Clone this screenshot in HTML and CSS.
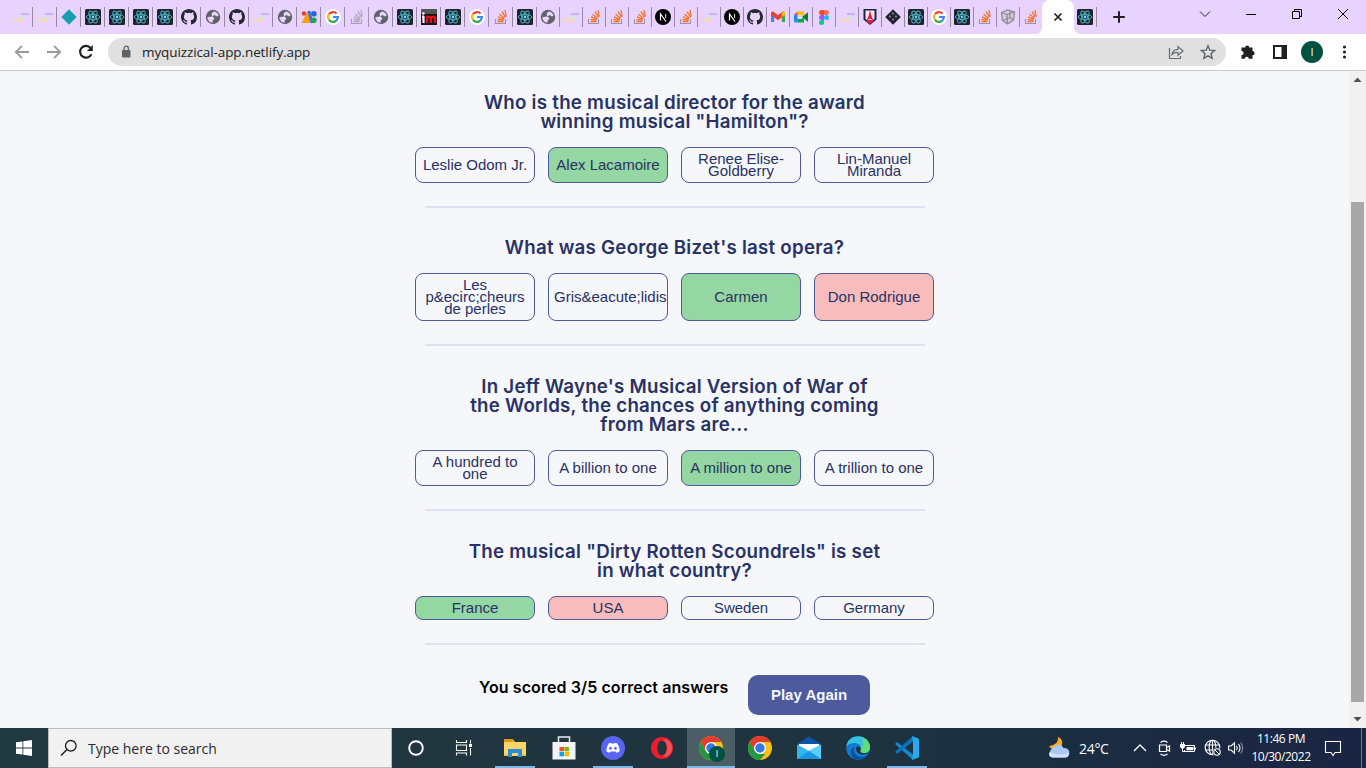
FILE: index.html
```html
<!DOCTYPE html>
<html lang="en">
<head>
<meta charset="utf-8">
<title>Quizzical</title>
<link rel="stylesheet" href="styles.css">
</head>
<body>
<svg class="sprite" aria-hidden="true">
  <symbol id="dash" viewBox="0 0 16 16"><path d="M8 4h8v2H8z" fill="#c0b2fb"/><path d="M6 7h7v3H6z" fill="#dbe0e5"/><path d="M0 10h3v2H0zM4 10h7v2H4z" fill="#fdd9a0"/></symbol>
  <symbol id="gem" viewBox="0 0 16 16"><path d="M8 .3 15.600 8 8 15.700.4 8z" fill="#189eae"/></symbol>
  <symbol id="react" viewBox="0 0 16 16"><rect width="16" height="16" rx="1.500" fill="#20232a"/><g fill="none" stroke="#4fb5cd" stroke-width=".9"><ellipse cx="8" cy="8" rx="6.700" ry="2.600"/><ellipse cx="8" cy="8" rx="6.700" ry="2.600" transform="rotate(60 8 8)"/><ellipse cx="8" cy="8" rx="6.700" ry="2.600" transform="rotate(120 8 8)"/></g><circle cx="8" cy="8" r="1.400" fill="#61dafb"/></symbol>
  <symbol id="github" viewBox="0 0 16 16"><path fill="#24292f" d="M8 0C3.580 0 0 3.580 0 8c0 3.540 2.290 6.530 5.470 7.590.4.07.55-.17.55-.38v-1.490c-2.010.37-2.530-.49-2.690-.94-.09-.23-.48-.94-.82-1.130-.28-.15-.68-.52-.01-.53.63-.01 1.080.58 1.230.82.72 1.210 1.870.87 2.330.66.07-.52.28-.87.51-1.070-1.780-.2-3.640-.89-3.640-3.950 0-.87.31-1.590.82-2.150-.08-.2-.36-1.020.08-2.120 0 0 .67-.21 2.200.82a7.500 7.500 0 0 1 4 0c1.530-1.040 2.200-.82 2.200-.82.44 1.100.16 1.920.08 2.120.51.56.82 1.270.82 2.150 0 3.070-1.870 3.750-3.650 3.950.29.25.54.73.54 1.480v2.200c0 .21.15.46.55.38A8 8 0 0 0 16 8c0-4.420-3.580-8-8-8z"/></symbol>
  <symbol id="globe" viewBox="0 0 16 16"><circle cx="8" cy="8" r="7.200" fill="#5f6368"/><path d="M8.700 2.500c-.4.600-2.300 1-2.300 2.100 0 1 .9 1.300.5 2.300-.3.900-1.900.6-2.900 1.100H2.400c0 3.100 2.200 5.500 5.200 5.700v-2c.5-1.100 1.700-.9 1.700-2.200 0-1.400-1.300-1.300-2.300-1.700 1-.8 1.600-1.800 2.900-1.600 1.200.2 1.200 1.200 2.100 1.200.7 0 1.200-.5 1.600-.8-.5-2.200-2.400-4-4.900-4.100z" fill="#e8d3ff"/><path d="m3.600 4.300 3.100-2 .8 1.300-1.600 2.200-2.600.6z" fill="#5f6368"/></symbol>
  <symbol id="shapes" viewBox="0 0 16 16"><circle cx="3" cy="4.500" r="2.300" fill="#ea4335"/><path d="M.5 14 6.500 2.500H9V14z" fill="#fb9d05"/><path d="M6.500 2h3l3 12h-3z" fill="#3971e8"/><circle cx="12.900" cy="4.800" r="2.800" fill="#2464dc"/><circle cx="12.900" cy="11.300" r="2.800" fill="#25a451"/></symbol>
  <symbol id="google" viewBox="0 0 16 16"><circle cx="8" cy="8" r="8" fill="#fff"/><g fill="none" stroke-width="2.200"><path d="M4 5.200a4.900 4.900 0 0 1 7.600-.7" stroke="#ea4335"/><path d="M4 10.800a4.900 4.900 0 0 1 0-5.600" stroke="#fbbc05"/><path d="M11.300 11.600A4.900 4.900 0 0 1 4 10.800" stroke="#34a853"/><path d="M8 8h4.900a4.900 4.900 0 0 1-1.600 3.600" stroke="#4285f4"/></g></symbol>
  <symbol id="stack" viewBox="0 0 16 16"><path d="M2.500 10v4.500h10V10" fill="none" stroke="#9c94a4" stroke-width="1.100"/><path d="M4.500 12.500h6M4.500 10.300l6 .8M5 7.800l5.800 2.300M6.500 5.200l5 4M9 2.700l3.500 5.500M12 1l1.200 6.500" stroke="var(--ray,#f27227)" stroke-width="1.300"/></symbol>
  <symbol id="im" viewBox="0 0 16 16"><rect width="16" height="16" fill="#161616"/><rect width="16" height="5" fill="#555"/><path d="M2.500 7v7M1 7.500h2" stroke="#fff" stroke-width="2.200"/><circle cx="2.400" cy="4.500" r="1.300" fill="#fff"/><path d="M6 14V8h2.500l1.300 1V14M9.800 9l1-1h2.700l.6 1v5" fill="none" stroke="#e5101c" stroke-width="2.300"/></symbol>
  <symbol id="next" viewBox="0 0 16 16"><circle cx="8" cy="8" r="8" fill="#000"/><path d="M5.500 11.500V5l5.500 7.500" fill="none" stroke="#fff" stroke-width="1.200"/><path d="M10.600 4.800v4.500" stroke="#bbb" stroke-width="1.200"/></symbol>
  <symbol id="gmail" viewBox="0 0 16 16"><path d="M1 3.500v9.500h3.200V6z" fill="#4285f4"/><path d="M15 3.500v9.500h-3.200V6z" fill="#34a853"/><path d="M1 3.500 3 2.300 8 6.300l5-4 2 1.200v2.400l-7 5.300-7-5.300z" fill="#ea4335"/><path d="M11.800 4v4.300L15 5.900V3.500l-2-1.200z" fill="#fbbc04"/></symbol>
  <symbol id="meet" viewBox="0 0 16 16"><path d="M1 6 4.500 2.500V6z" fill="#ea4335"/><path d="M4.500 2.500H11V6l-2 1.500V6H4.500z" fill="#fbbc04"/><path d="M1 6h3.500v7.500H2L1 12.500z" fill="#2684fc"/><path d="M4.500 10H9V8.500l2 1.500v3.500H4.500z" fill="#00ac47"/><path d="m9 8 6-4.800v9.500z" fill="#00832d"/></symbol>
  <symbol id="figma" viewBox="0 0 16 16"><path d="M8 1v5H5.500a2.500 2.500 0 0 1 0-5z" fill="#f24e1e"/><path d="M8 1h2.500a2.500 2.500 0 0 1 0 5H8z" fill="#ff7262"/><path d="M8 6v5H5.500a2.500 2.500 0 0 1 0-5z" fill="#a259ff"/><circle cx="10.500" cy="8.500" r="2.500" fill="#1abcfe"/><path d="M8 11v2.500A2.500 2.500 0 1 1 5.500 11z" fill="#0acf83"/></symbol>
  <symbol id="shield" viewBox="0 0 16 16"><path d="M1.500 0h13v10.500L8 16l-6.500-5.500z" fill="#1b2742"/><path d="M3.500 1.500h9v8.300L8 13.800 3.500 9.800z" fill="#f5e9f2"/><path d="M8 1 9.200 6l2.300 6L8 15l-3.500-3L6.800 6z" fill="#e01e47"/><path d="M6.500 10.500h3" stroke="#fff"/></symbol>
  <symbol id="checker" viewBox="0 0 16 16"><path d="M8 .2 15.800 8 8 15.800.2 8z" fill="#20232e"/><path d="m8 3 1.500 1.500L8 6 6.500 4.500zM5 6l1.500 1.500L5 9 3.500 7.500zM11 6l1.500 1.500L11 9 9.500 7.500zM8 9l1.500 1.500L8 12l-1.500-1.500z" fill="#7d758f"/></symbol>
  <symbol id="cube" viewBox="0 0 16 16"><path d="m1.500 3.500 6-2.500 7 2-1 8-6 4-5-3.500z" fill="#d5cadd"/><g fill="none" stroke="#918b95" stroke-width="1.300"><path d="m1.500 3.500 6-2.500 7 2-1 8-6 4-5-3.500z"/><path d="m1.500 3.500 5.500 2 7.500-2.500M7 5.500l.5 9.500M10 2v6.500l3.500 2.500M10 8.500l-7.500 3"/></g></symbol>
  <symbol id="chrome" viewBox="0 0 24 24"><circle cx="12" cy="12" r="12" fill="#fbc116"/><path d="M1.600 6A12 12 0 0 1 22.400 6H12L6.800 15z" fill="#e33b2e"/><path d="M1.600 6 6.800 15 12 18h5.200L12 24A12 12 0 0 1 1.600 6z" fill="#249644"/><circle cx="12" cy="12" r="6" fill="#fff"/><circle cx="12" cy="12" r="4.700" fill="#3478e5"/></symbol>
</svg>

<div class="tabstrip">
  <div class="tabs">
    <div class="tab"><svg><use href="#dash"/></svg></div><div class="tab"><svg><use href="#dash"/></svg></div><div class="tab"><svg><use href="#gem"/></svg></div>
    <div class="tab"><svg><use href="#react"/></svg></div><div class="tab"><svg><use href="#react"/></svg></div><div class="tab"><svg><use href="#react"/></svg></div><div class="tab"><svg><use href="#react"/></svg></div>
    <div class="tab"><svg><use href="#github"/></svg></div><div class="tab"><svg><use href="#globe"/></svg></div><div class="tab"><svg><use href="#github"/></svg></div>
    <div class="tab"><svg><use href="#dash"/></svg></div><div class="tab"><svg><use href="#globe"/></svg></div><div class="tab"><svg><use href="#shapes"/></svg></div><div class="tab"><svg><use href="#google"/></svg></div>
    <div class="tab muted"><svg><use href="#stack"/></svg></div><div class="tab"><svg><use href="#globe"/></svg></div><div class="tab"><svg><use href="#react"/></svg></div><div class="tab"><svg><use href="#im"/></svg></div>
    <div class="tab"><svg><use href="#react"/></svg></div><div class="tab"><svg><use href="#google"/></svg></div><div class="tab"><svg><use href="#stack"/></svg></div><div class="tab"><svg><use href="#react"/></svg></div>
    <div class="tab narrow"><svg><use href="#globe"/></svg></div><div class="tab narrow"><svg><use href="#dash"/></svg></div><div class="tab narrow"><svg><use href="#stack"/></svg></div><div class="tab narrow"><svg><use href="#stack"/></svg></div>
    <div class="tab narrow"><svg><use href="#stack"/></svg></div><div class="tab narrow"><svg><use href="#next"/></svg></div><div class="tab narrow"><svg><use href="#stack"/></svg></div><div class="tab narrow"><svg><use href="#dash"/></svg></div>
    <div class="tab narrow"><svg><use href="#next"/></svg></div><div class="tab narrow"><svg><use href="#github"/></svg></div><div class="tab narrow"><svg><use href="#gmail"/></svg></div><div class="tab narrow"><svg><use href="#meet"/></svg></div>
    <div class="tab narrow"><svg><use href="#figma"/></svg></div><div class="tab narrow"><svg><use href="#dash"/></svg></div><div class="tab narrow"><svg><use href="#shield"/></svg></div><div class="tab narrow"><svg><use href="#checker"/></svg></div>
    <div class="tab narrow"><svg><use href="#react"/></svg></div><div class="tab narrow"><svg><use href="#google"/></svg></div><div class="tab narrow"><svg><use href="#react"/></svg></div><div class="tab narrow"><svg><use href="#stack"/></svg></div>
    <div class="tab narrow"><svg><use href="#cube"/></svg></div><div class="tab narrow last"><svg><use href="#stack"/></svg></div>
    <div class="tab-active"><svg viewBox="0 0 16 16"><path d="m4.500 4.500 7 7m0-7-7 7" stroke="#202124" stroke-width="1.700"/></svg></div>
    <div class="tab narrow"><svg><use href="#react"/></svg></div>
    <div class="new-tab"><svg viewBox="0 0 16 16"><path d="M8 2.200v11.600M2.200 8h11.600" stroke="#202124" stroke-width="2"/></svg></div>
  </div>
  <div class="window-buttons">
    <svg viewBox="0 0 16 16"><path d="m3 5.500 5 5 5-5" fill="none" stroke="#222"/></svg>
    <svg viewBox="0 0 16 16"><path d="M3 8.500h10" stroke="#000"/></svg>
    <svg viewBox="0 0 16 16"><path d="M3.500 5.500h7v7h-7zM5.500 5.500v-2h7v7h-2" fill="none" stroke="#000"/></svg>
    <svg viewBox="0 0 16 16"><path d="m3 3 10 10M13 3 3 13" stroke="#000"/></svg>
  </div>
</div>

<div class="toolbar">
  <div class="nav">
    <svg viewBox="0 0 16 16"><path d="M15 8H2M8 1.800 1.800 8 8 14.200" fill="none" stroke="#9b9b9d" stroke-width="1.800"/></svg>
    <svg viewBox="0 0 16 16"><path d="M1 8h13M8 1.800 14.200 8 8 14.200" fill="none" stroke="#9b9b9d" stroke-width="1.800"/></svg>
    <svg viewBox="0 0 16 16"><path d="M13.400 10.200A5.900 5.900 0 1 1 12.600 4" fill="none" stroke="#202124" stroke-width="2.100"/><path d="M14.800 1v6H9z" fill="#202124"/></svg>
  </div>
  <div class="omnibox">
    <svg class="lock" viewBox="0 0 10 14"><rect x="1" y="5" width="8.500" height="7.500" rx="1" fill="#5f6368"/><path d="M3 5.500V3.400a2.200 2.200 0 0 1 4.400 0v2.100" fill="none" stroke="#5f6368" stroke-width="1.300"/></svg>
    <span class="url">myquizzical-app.netlify.app</span>
    <svg viewBox="0 0 16 16"><path d="M1.500 4v10.500h11V12" fill="none" stroke="#6a6b6e" stroke-width="1.200"/><path d="M4 10.500C4.500 7 6.500 5.500 10 5.400V2.500L15 7l-5 4.300V8.500C7.500 8.300 5.500 9 4 10.500z" fill="none" stroke="#6a6b6e" stroke-width="1.200"/></svg>
    <svg viewBox="0 0 16 16"><path d="m8 1.800 1.800 4.400 4.800.4-3.600 3.100 1.100 4.600L8 11.800l-4.100 2.500L5 9.700 1.400 6.600l4.800-.4z" fill="none" stroke="#5f6368" stroke-width="1.400"/></svg>
  </div>
  <div class="extras">
    <svg viewBox="0 0 16 16"><path d="M1.500 3.500h3.700a2 2 0 0 1 4 0h3.300v3.600a2.100 2.100 0 0 1 0 4.200v3.500H8.800a2 2 0 0 0-4 0H1.500v-3.500a2.100 2.100 0 0 0 0-4.200z" fill="#202124"/></svg>
    <svg viewBox="0 0 16 16"><path d="M1 1h14v14H1zM3 3v10h6.500V3z" fill="#202124" fill-rule="evenodd"/></svg>
    <span class="avatar">I</span>
    <svg viewBox="0 0 16 16"><g fill="#202124"><circle cx="8.500" cy="3" r="1.600"/><circle cx="8.500" cy="8" r="1.600"/><circle cx="8.500" cy="13" r="1.600"/></g></svg>
  </div>
</div>

<div class="viewport">
  <main class="quiz">
    <section class="question">
      <h3>Who is the musical director for the award winning musical "Hamilton"?</h3>
      <div class="answers"><button>Leslie Odom Jr.</button><button class="right">Alex Lacamoire</button><button>Renee Elise-Goldberry</button><button>Lin-Manuel Miranda</button></div>
    </section>
    <section class="question">
      <h3>What was George Bizet's last opera?</h3>
      <div class="answers"><button>Les p&amp;ecirc;cheurs de perles</button><button>Gris&amp;eacute;lidis</button><button class="right">Carmen</button><button class="wrong">Don Rodrigue</button></div>
    </section>
    <section class="question">
      <h3>In Jeff Wayne's Musical Version of War of the Worlds, the chances of anything coming from Mars are...</h3>
      <div class="answers"><button>A hundred to one</button><button>A billion to one</button><button class="right">A million to one</button><button>A trillion to one</button></div>
    </section>
    <section class="question">
      <h3>The musical "Dirty Rotten Scoundrels" is set in what country?</h3>
      <div class="answers"><button class="right">France</button><button class="wrong">USA</button><button>Sweden</button><button>Germany</button></div>
    </section>
    <div class="result"><span class="score">You scored 3/5 correct answers</span><button class="again">Play Again</button></div>
  </main>
  <div class="scrollbar">
    <svg viewBox="0 0 17 17"><path d="m4.500 11 4-4.500 4 4.500z" fill="#505050"/></svg>
    <div class="thumb"></div>
    <svg viewBox="0 0 17 17"><path d="m4.500 6 4 4.500 4-4.500z" fill="#505050"/></svg>
  </div>
</div>

<div class="taskbar">
  <div class="start"><svg viewBox="0 0 16 16"><path d="M0 2.300 6.500 1.400v6.200H0zM7.300 1.300 16 0v7.600H7.300zM0 8.400h6.500v6.200L0 13.700zM7.300 8.400H16V16l-8.700-1.300z" fill="#fff"/></svg></div>
  <div class="search"><svg viewBox="0 0 18 18"><circle cx="10.800" cy="6.800" r="5.300" fill="none" stroke="#1c1c1c" stroke-width="1.300"/><path d="m7 10.600-6 6" stroke="#1c1c1c" stroke-width="1.400"/></svg><span>Type here to search</span></div>
  <div class="apps">
    <div class="app"><svg viewBox="0 0 24 24"><circle cx="12" cy="12" r="6.800" fill="none" stroke="#fff" stroke-width="1.900"/></svg></div>
    <div class="app"><svg viewBox="0 0 24 24"><path d="M3.500 4v2.500h10V4M3.500 19.500V17h10v2.500M3.500 9h10v5.500h-10zM17.500 4v3.500M17.500 12v7.500" fill="none" stroke="#fff" stroke-width="1.100"/><path d="M16 8h3v3h-3z" fill="#fff"/></svg></div>
    <div class="app open first"><svg viewBox="0 0 24 24"><path d="M1 3.500h9l2 2.500h11v14H1z" fill="#fad568"/><path d="M1 3h9v3H1z" fill="#dc9b13"/><path d="M5 21v-8h14v8h-4v-4H9v4z" fill="#2e8bd9"/><path d="M1 18.500h4V20H1zm18 0h4V20h-4z" fill="#f3bd39"/></svg></div>
    <div class="app"><svg viewBox="0 0 24 24"><path d="M6.500 8V1h11v7" fill="none" stroke="#e9eff3" stroke-width="1.500"/><path d="M.5 6h23v17.500H.5z" fill="#f4f5f6"/><path d="M7.500 11H12v4.300H7.500z" fill="#f25022"/><path d="M12.500 11H17v4.300h-4.500z" fill="#7fba00"/><path d="M7.500 16H12v4.300H7.500z" fill="#00a4ef"/><path d="M12.500 16H17v4.300h-4.500z" fill="#ffb900"/></svg></div>
    <div class="app open"><svg viewBox="0 0 24 24"><circle cx="12" cy="12" r="12" fill="#5865f2"/><path d="M8 7.200 10 6.700l.5.9h3l.5-.9 2 .5c1.800 2.200 2.700 4.800 2.600 8-1 .8-2 1.300-3.200 1.600l-.8-1.200h-5.200l-.8 1.200c-1.200-.3-2.200-.8-3.200-1.600-.1-3.200.8-5.800 2.600-8z" fill="#fff"/><ellipse cx="9.500" cy="12.300" rx="1.300" ry="1.500" fill="#5865f2"/><ellipse cx="14.500" cy="12.300" rx="1.300" ry="1.500" fill="#5865f2"/></svg></div>
    <div class="app"><svg viewBox="0 0 24 24"><path d="M12 1a11 11 0 1 0 0 22 11 11 0 1 0 0-22zm0 3.500c3 0 4.600 3.300 4.600 7.500s-1.600 7.500-4.600 7.500S7.400 16.200 7.400 12 9 4.500 12 4.500z" fill="#ee1c2e" fill-rule="evenodd"/><path d="M17 3.500c7 4 7 13 0 17-1.500.6-3.500.4-4.500-.7 3-.8 4.500-3.800 4.500-7.800s-1.500-7-4.500-7.800c1-1.100 3-1.300 4.500-.7z" fill="#f35055"/></svg></div>
    <div class="app open current"><svg viewBox="0 0 24 24"><use href="#chrome"/></svg><span class="profile">I</span></div>
    <div class="app"><svg viewBox="0 0 24 24"><use href="#chrome"/></svg></div>
    <div class="app"><svg viewBox="0 0 24 24"><path d="M0 8 12 .5 24 8v5H0z" fill="#1054a6"/><path d="M2 8h20v6l-10 5L2 14z" fill="#fff"/><path d="M0 8.500 12 15l12-6.500V23H0z" fill="#32b5ed"/><path d="M12 15 24 8.500V23z" fill="#59d0fa"/><path d="M0 23 12 15l12 8z" fill="#1b98e1"/></svg></div>
    <div class="app"><svg viewBox="0 0 24 24"><circle cx="12" cy="12" r="11.800" fill="#127bd3"/><path d="M.3 11C1 4 6 .2 12 .2 19 .2 24 5.500 24 11c0 4-3 6-6.500 6-3 0-4-1.500-3-3C16 11.500 14 7 9 7 4.500 7 1.500 8.500.3 11z" fill="#35c1df"/><path d="M15 1c6 1.500 9 6 9 10 0 4-3 6-6.500 6-3 0-4-1.500-3-3C17 10 19 5 15 1z" fill="#62dc77"/><path d="M9 11c-3 4 1 10 7 10 2 0 4-.5 6-3-3 6-10 7.500-14.500 4C3 18.500 4 12 9 11z" fill="#0c529e"/><path d="M10.500 11c-1.500 3 1 7.500 6.500 7.500 3 0 5.500-1 7-2.500-3 1.500-11 2-9.500-1.500 1-2-1.500-5-4-3.500z" fill="#20323f"/></svg></div>
    <div class="app open"><svg viewBox="0 0 24 24"><path d="m0 8 2-2 16 12.500V24z" fill="#1686cc"/><path d="m0 16 2 2L18 5.500V0z" fill="#0875bc"/><path d="m17 0 7 2.800v18.400L17 24l1-5.500v-13z" fill="#2ca7ee"/></svg></div>
  </div>
  <div class="tray">
    <svg class="weather" viewBox="0 0 24 24"><path d="M11 1c.5 4-1.500 8-9 9 2 5 11 5 13-1 1-4-1-7-4-8z" fill="#f8a820"/><path d="M5.500 21.500a5 5 0 0 1 0-9 6 6 0 0 1 11-.5 4.800 4.800 0 0 1 2 9.500z" fill="#a9c8f5"/><path d="M5.500 21.500C2 21 1 18 3 16c5 3 12 3 19 1 0 3-1.500 4.500-3.500 4.500z" fill="#d2e2fb"/></svg>
    <span class="temp">24°C</span>
    <svg class="up" viewBox="0 0 16 16"><path d="m2 11 6-6 6 6" fill="none" stroke="#fff" stroke-width="1.300"/></svg>
    <svg class="cam" viewBox="0 0 16 16"><g fill="none" stroke="#fff" stroke-width="1.200"><path d="M3.500 5h7v6.500h-7zM10.500 7.500 13.500 6v5l-3-1.500M4.500 2.500c2-1.500 5-1.500 7 0M4.500 14c2 1.500 5 1.500 7 0"/></g></svg>
    <svg class="battery" viewBox="0 0 16 16"><path d="M5 5.500h9.500v6H4.500V10" fill="none" stroke="#fff"/><path d="M6.500 7h7v3.300h-7zM15 7.500h1v2h-1zM0 4h5v3L3.500 8.500h-2L0 7z" fill="#fff"/><path d="M1.500 2v3M3.500 2v3M2.500 8v3.500H5" fill="none" stroke="#fff"/></svg>
    <svg class="net" viewBox="0 0 18 18"><g fill="none" stroke="#fff" stroke-width="1.100"><circle cx="8.500" cy="8.500" r="7.300"/><ellipse cx="8.500" cy="8.500" rx="3.400" ry="7.300"/><path d="M1.500 6h14M1.500 11h14M8.500 1v15"/></g><circle cx="13" cy="13" r="4.500" fill="#1c2b42"/><circle cx="13" cy="13" r="3.200" fill="none" stroke="#fff" stroke-width="1.100"/><path d="m11 11 4 4" stroke="#fff"/></svg>
    <svg class="sound" viewBox="0 0 16 16"><g fill="none" stroke="#fff" stroke-width="1.100"><path d="M.6 6h2.500L6.500 2.800v10.400L3.100 10H.6zM8.500 5.800q1.500 2.200 0 4.400M10.500 4q3 4 0 8"/><path d="M12.700 2.500q4 5.500 0 11" stroke="#8090a0"/></g></svg>
    <div class="clock"><span>11:46 PM</span><span>10/30/2022</span></div>
    <svg class="note" viewBox="0 0 18 18"><path d="M1.500 2.500h15v11h-5.500L9 16.500l-2-3H1.500z" fill="none" stroke="#fff" stroke-width="1.100"/></svg>
    <span class="peek"></span>
  </div>
</div>
</body>
</html>
```
FILE: styles.css
```css
* { box-sizing: border-box; }
body { margin: 0; width: 1366px; height: 768px; overflow: hidden; display: flex; flex-direction: column; font-family: "Open Sans", "Noto Sans", sans-serif; background: #f5f7fb; }
svg { display: block; width: 16px; height: 16px; flex: none; }
.sprite { position: absolute; width: 0; height: 0; }

/* Tab strip */
.tabstrip { height: 34px; flex: none; display: flex; justify-content: space-between; background: #e8d3ff; }
.tabs { display: flex; flex: 1; padding-left: 9px; }
.tab { width: 24px; height: 20px; margin-top: 7px; padding: 2px 0 0 4px; border-right: 1px solid #95889f; flex: none; }
.tab.narrow { width: 23px; padding-left: 3px; }
.tab.last { border-right-color: transparent; }
.muted { --ray: #a79fad; opacity: .85; }
.tab-active { position: relative; width: 32px; height: 34px; margin-left: -1px; padding: 9px 0 0 8px; background: #fff; border-radius: 8px 8px 0 0; flex: none; }
.tab-active::before, .tab-active::after { content: ""; position: absolute; bottom: 0; width: 6px; height: 6px; }
.tab-active::before { left: -6px; background: radial-gradient(circle at 0 0, transparent 5.500px, #fff 6px); }
.tab-active::after { right: -6px; background: radial-gradient(circle at 100% 0, transparent 5.500px, #fff 6px); }
.new-tab { padding: 9px 0 0 14px; }
.window-buttons { display: flex; gap: 30px; padding: 6px 15px 0 0; height: 34px; }

/* Toolbar */
.toolbar { height: 37px; flex: none; display: flex; align-items: flex-start; background: #fff; border-bottom: 1px solid #c9c9cb; }
.nav { display: flex; gap: 16px; width: 108px; padding: 10px 0 0 14px; }
.omnibox { width: 1118px; height: 28px; margin-top: 4px; border-radius: 14px; background: #e0e0e0; display: flex; align-items: center; gap: 16px; padding: 0 10px 0 13px; }
.lock { width: 10px; height: 14px; }
.url { flex: 1; margin: -1px 0 0 -5px; font-size: 13.500px; color: #202124; letter-spacing: -.1px; }
.extras { display: flex; align-items: center; gap: 13px; height: 36px; padding-left: 14px; }
.extras svg + svg { margin-left: 3px; }
.avatar { width: 22px; height: 22px; border-radius: 50%; background: #00503f; color: #fff; font-size: 11px; line-height: 22px; text-align: center; }

/* Page */
.viewport { height: 657px; flex: none; display: flex; background: #f5f7fb; }
.quiz { flex: 1; padding-top: 21.600px; display: flex; flex-direction: column; align-items: center; }
.question { width: 519px; margin-bottom: 30.670px; flex: none; }
.question::after { content: ""; display: block; width: 500px; height: 2px; margin: 23px 0 0 10px; background: #dee1f1; }
h3 { width: 419px; margin: 0 auto 16px; font: 600 18.720px/19px Inter, sans-serif; letter-spacing: .25px; color: #293264; text-align: center; }
.answers { display: grid; grid-template-columns: repeat(4, 120px); gap: 13px; }
.answers button { min-height: 24px; padding: 5px; border: 1px solid #4d5b9e; border-radius: 8px; background: transparent; color: #293264; font: 15px/12px "Liberation Sans", Arial, sans-serif; text-align: center; }
.answers .right { background: #94d7a2; }
.answers .wrong { background: #f8bcbc; }
.result { display: flex; gap: 20px; height: 40px; width: 391px; }
.score { padding-top: 3px; font: 600 16px/19px Inter, sans-serif; letter-spacing: .09px; color: #000; white-space: nowrap; width: 249px; }
.again { width: 122px; height: 40px; padding: 0 0 2px; border: 0; border-radius: 10px; background: #4d5b9e; color: #f5f7fb; font: bold 15px "Liberation Sans", Arial, sans-serif; }
.scrollbar { width: 17px; display: flex; flex-direction: column; justify-content: space-between; background: #f1f1f1; }
.scrollbar svg { width: 17px; height: 17px; }
.thumb { width: 13px; height: 500px; margin: 105px auto 0 2px; background: #a8a8a8; }

/* Taskbar */
.taskbar { height: 40px; flex: none; display: flex; background: linear-gradient(90deg, #213940, #20343f 55%, #1b3040 75%, #1b2842 88%, #1a2543); color: #fff; }
.start { width: 48px; padding: 12px 0 0 16px; }
.search { width: 344px; border: 1px solid #b9bcbd; background: #f1f1f1; display: flex; align-items: center; gap: 10px; padding-left: 11px; color: #2b2b2b; font-size: 14px; }
.search svg { width: 18px; height: 18px; }
.apps { display: flex; gap: 1px; }
.app { width: 48px; height: 40px; padding-top: 8px; display: flex; justify-content: center; position: relative; }
.app.first { margin-left: 1px; }
.app svg { width: 24px; height: 24px; }
.app.open::after { content: ""; position: absolute; left: 4px; right: 4px; bottom: 0; height: 2px; background: #76b9ed; }
.app.current { background: #4b5d65; }
.app.current::after { left: 0; right: 0; }
.profile { position: absolute; left: 22px; top: 18px; width: 16px; height: 16px; border-radius: 50%; background: #00503f; font-size: 9px; line-height: 16px; text-align: center; }
.tray { margin-left: auto; display: flex; align-items: center; }
.weather { width: 24px; height: 24px; margin-right: 8px; }
.temp { font-size: 14px; width: 53px; letter-spacing: -.3px; }
.up { margin-right: 8px; }
.cam { margin-right: 8px; }
.battery { margin-right: 8px; }
.net { width: 18px; height: 18px; margin-right: 6px; }
.sound { margin-right: 7px; }
.clock { width: 60px; display: flex; flex-direction: column; align-items: center; font-size: 12px; line-height: 18px; letter-spacing: -.45px; white-space: nowrap; }
.note { width: 18px; height: 18px; margin: 0 19px 0 13px; }
.peek { width: 5px; height: 40px; border-left: 1px solid #6c7789; }
```
